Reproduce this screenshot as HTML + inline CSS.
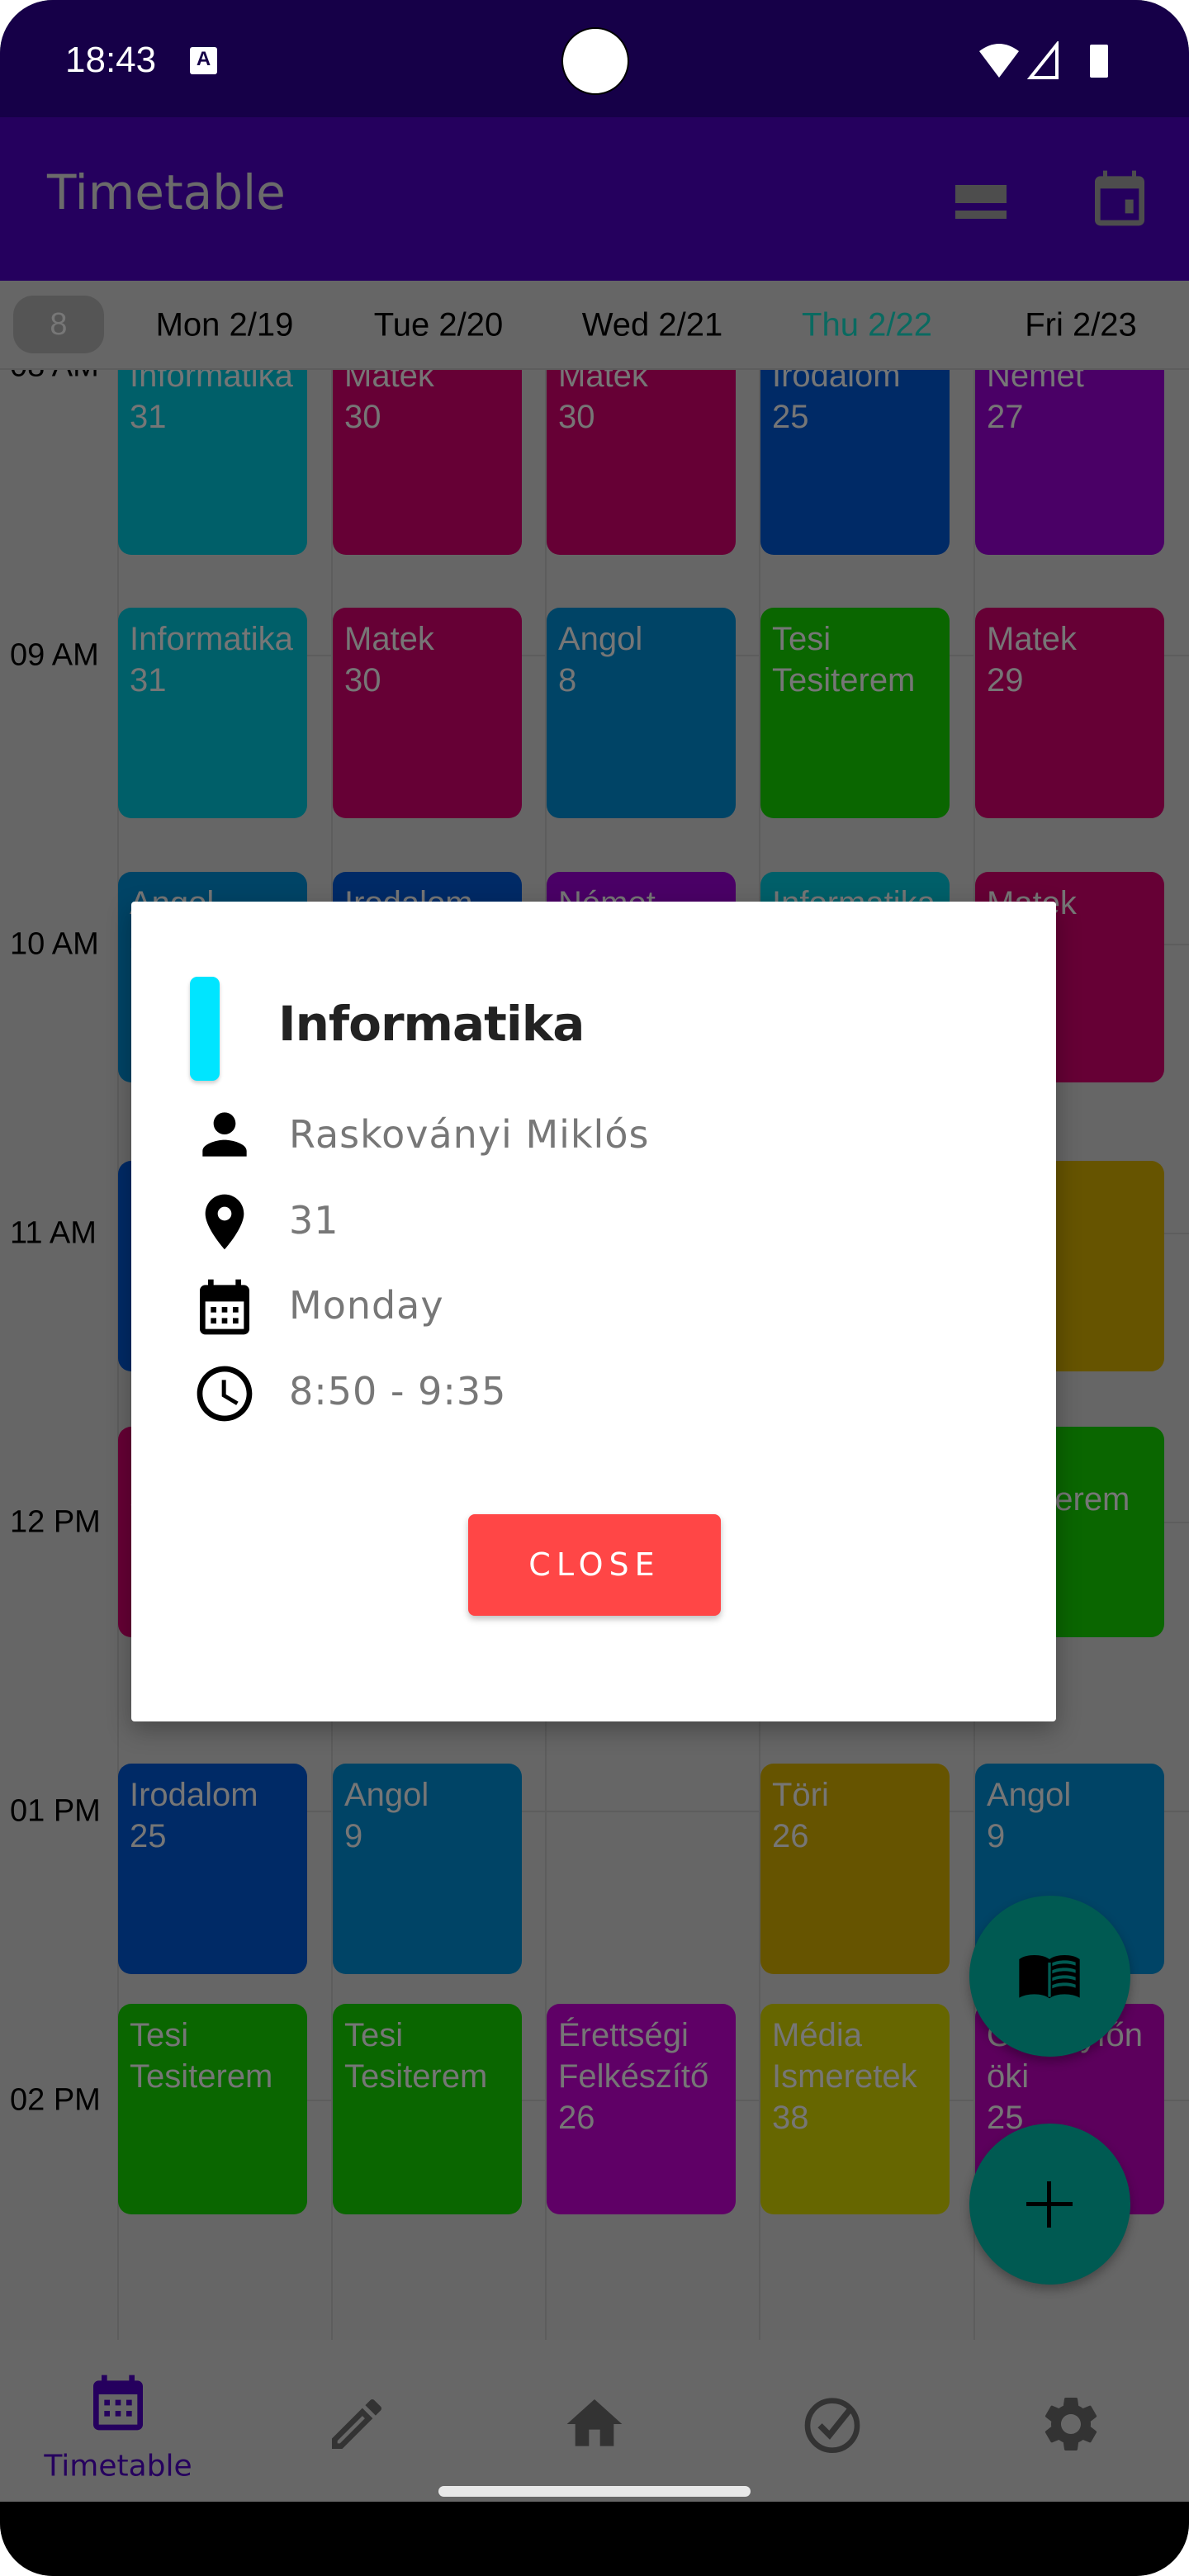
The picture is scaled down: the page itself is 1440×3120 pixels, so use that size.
<!DOCTYPE html>
<html><head><meta charset="utf-8"><style>
*{margin:0;padding:0;box-sizing:border-box}
body{width:1440px;height:3120px;background:#fff;position:relative;overflow:hidden;font-family:"Liberation Sans",sans-serif}
.scr{position:absolute;left:0;top:0;width:1440px;height:3120px;border-radius:64px;overflow:hidden;background:#666}
.abs{position:absolute}
.card{position:absolute;width:229px;height:255px;border-radius:16px;color:#767676;font-size:40px;line-height:50px;padding:13px 0 0 14px;white-space:nowrap;overflow:hidden}
.tl{position:absolute;left:12px;font-size:38px;color:#000;transform:translateY(-50%)}
.hl{position:absolute;left:143px;right:0;height:2px;background:#5d5d5d}
.vl{position:absolute;top:448px;width:2px;height:2386px;background:#5d5d5d}
.day{position:absolute;top:394px;font-size:40px;transform:translate(-50%,-50%);color:#000;white-space:nowrap}
.row{position:absolute;left:350px;font-size:46px;color:#777;transform:translateY(-50%);font-family:"DejaVu Sans","Liberation Sans",sans-serif;letter-spacing:1px}
.ic{position:absolute;left:232px;width:80px;height:80px}
.nav{position:absolute;top:2896px;width:80px;height:80px}
</style></head><body>
<div class="scr">
<!-- grid lines -->
<div class="vl" style="left:142px"></div><div class="vl" style="left:401px"></div><div class="vl" style="left:660px"></div><div class="vl" style="left:919px"></div><div class="vl" style="left:1179px"></div>
<div class="hl" style="top:793px"></div><div class="hl" style="top:1143px"></div><div class="hl" style="top:1493px"></div><div class="hl" style="top:1843px"></div><div class="hl" style="top:2193px"></div><div class="hl" style="top:2543px"></div>
<div class="tl" style="top:444px">08 AM</div>
<div class="tl" style="top:794px">09 AM</div>
<div class="tl" style="top:1144px">10 AM</div>
<div class="tl" style="top:1494px">11 AM</div>
<div class="tl" style="top:1844px">12 PM</div>
<div class="tl" style="top:2194px">01 PM</div>
<div class="tl" style="top:2544px">02 PM</div>
<!-- row 8 -->
<div class="card" style="left:143px;top:417px;background:#005f69">Informatika<br>31</div>
<div class="card" style="left:403px;top:417px;background:#660035">Matek<br>30</div>
<div class="card" style="left:662px;top:417px;background:#660035">Matek<br>30</div>
<div class="card" style="left:921px;top:417px;background:#002a66">Irodalom<br>25</div>
<div class="card" style="left:1181px;top:417px;background:#4a0066">Német<br>27</div>
<!-- row 9 -->
<div class="card" style="left:143px;top:736px;background:#005f69">Informatika<br>31</div>
<div class="card" style="left:403px;top:736px;background:#660035">Matek<br>30</div>
<div class="card" style="left:662px;top:736px;background:#004466">Angol<br>8</div>
<div class="card" style="left:921px;top:736px;background:#0a6600">Tesi<br>Tesiterem</div>
<div class="card" style="left:1181px;top:736px;background:#660035">Matek<br>29</div>
<!-- row 10 -->
<div class="card" style="left:143px;top:1056px;background:#004466">Angol<br>8</div>
<div class="card" style="left:403px;top:1056px;background:#002a66">Irodalom<br>25</div>
<div class="card" style="left:662px;top:1056px;background:#4a0066">Német<br>27</div>
<div class="card" style="left:921px;top:1056px;background:#005f69">Informatika<br>31</div>
<div class="card" style="left:1181px;top:1056px;background:#660035">Matek<br>29</div>
<!-- row 11 -->
<div class="card" style="left:143px;top:1406px;background:#002a66">Irodalom<br>25</div>
<div class="card" style="left:1181px;top:1406px;background:#665400">Töri<br>26</div>
<!-- row 12 -->
<div class="card" style="left:143px;top:1728px;background:#660035">Matek<br>30</div>
<div class="card" style="left:1181px;top:1728px;background:#0a6600">Tesi<br>Tesiterem</div>
<!-- row 1 -->
<div class="card" style="left:143px;top:2136px;background:#002a66">Irodalom<br>25</div>
<div class="card" style="left:403px;top:2136px;background:#004466">Angol<br>9</div>
<div class="card" style="left:921px;top:2136px;background:#665400">Töri<br>26</div>
<div class="card" style="left:1181px;top:2136px;background:#004466">Angol<br>9</div>
<!-- row 2 -->
<div class="card" style="left:143px;top:2427px;background:#0a6600">Tesi<br>Tesiterem</div>
<div class="card" style="left:403px;top:2427px;background:#0a6600">Tesi<br>Tesiterem</div>
<div class="card" style="left:662px;top:2427px;background:#5f0066">Érettségi<br>Felkészítő<br>26</div>
<div class="card" style="left:921px;top:2427px;background:#666600">Média<br>Ismeretek<br>38</div>
<div class="card" style="left:1181px;top:2427px;background:#5c005c">Osztályfőn<br>öki<br>25</div>

<!-- FABs -->
<div class="abs" style="left:1174px;top:2296px;width:195px;height:195px;border-radius:50%;background:#005a52;box-shadow:0 6px 12px rgba(0,0,0,.3)"></div>
<svg class="abs" style="left:1231px;top:2353px" width="80" height="80" viewBox="0 0 24 24"><path fill="#000" d="M1 6c1.5-1.1 3.5-1.5 5.5-1.5S10.5 4.9 12 6c1.5-1.1 3.5-1.5 5.5-1.5S21.5 4.9 23 6v14c-1.5-.9-3.5-1.3-5.5-1.3s-4 .4-5.5 1.5c-1.5-1.1-3.5-1.5-5.5-1.5S2.5 19.1 1 20z"/><path fill="#005a52" d="M13 7.3c1.2-.6 2.9-.9 4.5-.9s3 .3 4 .7v1.2c-1-.4-2.5-.7-4-.7s-3.3.3-4.5.9zm0 2.7c1.2-.6 2.9-.9 4.5-.9s3 .3 4 .7V11c-1-.4-2.5-.7-4-.7s-3.3.3-4.5.9zm0 2.7c1.2-.6 2.9-.9 4.5-.9s3 .3 4 .7v1.2c-1-.4-2.5-.7-4-.7s-3.3.3-4.5.9zm0 2.7c1.2-.6 2.9-.9 4.5-.9s3 .3 4 .7v1.2c-1-.4-2.5-.7-4-.7s-3.3.3-4.5.9zM11.5 7.2v12.5h1V7.2z"/></svg>
<div class="abs" style="left:1174px;top:2572px;width:195px;height:195px;border-radius:50%;background:#005a52;box-shadow:0 6px 12px rgba(0,0,0,.3)"></div>
<div class="abs" style="left:1243px;top:2667px;width:56px;height:5px;background:#000"></div>
<div class="abs" style="left:1268px;top:2642px;width:5px;height:56px;background:#000"></div>

<!-- bottom nav -->
<div class="abs" style="left:0;top:2834px;width:1440px;height:196px;background:#676767"></div>
<svg class="nav" style="left:103px;top:2870px" viewBox="0 0 24 24"><path fill="#25005e" d="M19 4h-1V2h-2v2H8V2H6v2H5c-1.1 0-2 .9-2 2v14c0 1.1.9 2 2 2h14c1.1 0 2-.9 2-2V6c0-1.1-.9-2-2-2zm0 16H5V9h14zM7 11h2v2H7zm4 0h2v2h-2zm4 0h2v2h-2zm-8 4h2v2H7zm4 0h2v2h-2zm4 0h2v2h-2z"/></svg>
<div class="abs" style="left:143px;top:2987px;transform:translate(-50%,-50%);font-size:36px;color:#25005e;font-family:'DejaVu Sans',sans-serif">Timetable</div>
<svg class="nav" style="left:392px" viewBox="0 0 24 24"><path fill="#333" d="M3 17.25V21h3.75L17.81 9.94l-3.75-3.75L3 17.25zM5.92 19H5v-.92l9.06-9.06.92.92L5.92 19zM20.71 5.63l-2.34-2.34a1 1 0 00-1.41 0l-1.83 1.83 3.75 3.75 1.83-1.83a1 1 0 000-1.41z"/></svg>
<svg class="nav" style="left:680px" viewBox="0 0 24 24"><path fill="#333" d="M10 20v-6h4v6h5v-8h3L12 3 2 12h3v8z"/></svg>
<svg class="nav" style="left:968px" viewBox="0 0 24 24"><circle cx="12" cy="12.5" r="9" fill="none" stroke="#333" stroke-width="2"/><path fill="none" stroke="#333" stroke-width="2.2" d="M7.5 12.5l3.5 3.5 8-10"/></svg>
<svg class="nav" style="left:1257px" viewBox="0 0 24 24"><path fill="#333" d="M19.14 12.94c.04-.3.06-.61.06-.94 0-.32-.02-.64-.07-.94l2.03-1.58a.49.49 0 00.12-.61l-1.92-3.32a.488.488 0 00-.59-.22l-2.39.96c-.5-.38-1.03-.7-1.62-.94l-.36-2.54a.484.484 0 00-.48-.41h-3.84c-.24 0-.43.17-.47.41l-.36 2.54c-.59.24-1.13.57-1.62.94l-2.39-.96c-.22-.08-.47 0-.59.22L2.74 8.87c-.12.21-.08.47.12.61l2.03 1.58c-.05.3-.09.63-.09.94s.02.64.07.94l-2.03 1.58a.49.49 0 00-.12.61l1.92 3.32c.12.22.37.29.59.22l2.39-.96c.5.38 1.03.7 1.62.94l.36 2.54c.05.24.24.41.48.41h3.84c.24 0 .44-.17.47-.41l.36-2.54c.59-.24 1.13-.56 1.62-.94l2.39.96c.22.08.47 0 .59-.22l1.92-3.32c.12-.22.07-.47-.12-.61l-2.01-1.58zM12 15.6c-1.98 0-3.6-1.62-3.6-3.6s1.62-3.6 3.6-3.6 3.6 1.62 3.6 3.6-1.62 3.6-3.6 3.6z"/></svg>
<div class="abs" style="left:0;top:3030px;width:1440px;height:90px;background:#000"></div>
<div class="abs" style="left:531px;top:3011px;width:378px;height:13px;border-radius:7px;background:#e8e8e8"></div>

<!-- day header -->
<div class="abs" style="left:0;top:340px;width:1440px;height:108px;background:#666;border-bottom:2px solid #5d5d5d"></div>
<div class="abs" style="left:16px;top:358px;width:110px;height:70px;border-radius:24px;background:#555;color:#777;font-size:38px;text-align:center;line-height:70px">8</div>
<div class="day" style="left:272px">Mon 2/19</div>
<div class="day" style="left:531px">Tue 2/20</div>
<div class="day" style="left:790px">Wed 2/21</div>
<div class="day" style="left:1050px;color:#0a6a60">Thu 2/22</div>
<div class="day" style="left:1309px">Fri 2/23</div>

<!-- app bar -->
<div class="abs" style="left:0;top:142px;width:1440px;height:198px;background:#25005e"></div>
<div class="abs" style="left:57px;top:233px;transform:translateY(-50%);font-size:58px;color:#6b6b6b;font-family:'DejaVu Sans',sans-serif">Timetable</div>
<div class="abs" style="left:1157px;top:224px;width:62px;height:22px;background:#4d4d4d"></div>
<div class="abs" style="left:1157px;top:255px;width:62px;height:10px;background:#4d4d4d"></div>
<svg class="abs" style="left:1316px;top:200px" width="80" height="80" viewBox="0 0 24 24"><path fill="#4d4d4d" d="M19 4h-1V2h-1.5v2h-9V2H6v2H5c-1.1 0-2 .9-2 2v14c0 1.1.9 2 2 2h14c1.1 0 2-.9 2-2V6c0-1.1-.9-2-2-2zm0 16H5V8.5h14zm-5-7.5h3v5h-3z"/></svg>

<!-- status bar -->
<div class="abs" style="left:0;top:0;width:1440px;height:142px;background:#160048"></div>
<div class="abs" style="left:79px;top:73px;transform:translateY(-50%);font-size:44px;color:#fff">18:43</div>
<div class="abs" style="left:230px;top:57px;width:33px;height:33px;background:#fff;border-radius:3px;color:#160048;font-size:24px;font-weight:bold;text-align:center;line-height:30px">A</div>
<div class="abs" style="left:680px;top:33px;width:82px;height:82px;border-radius:50%;background:#fff;border:2px solid #000"></div>
<svg class="abs" style="left:1184px;top:50px" width="160" height="46" viewBox="0 0 160 46"><path fill="#fff" d="M2 12Q26 -6 50 12L26 44z"/><path fill="none" stroke="#fff" stroke-width="4" d="M64 44L96 4V44z"/><rect x="136" y="4" width="22" height="40" rx="2" fill="#fff"/></svg>

<!-- dialog -->
<div class="abs" style="left:159px;top:1092px;width:1120px;height:993px;background:#fff;border-radius:4px;box-shadow:0 10px 30px rgba(0,0,0,.3)"></div>
<div class="abs" style="left:230px;top:1183px;width:36px;height:126px;border-radius:9px;background:#00e5ff;box-shadow:0 3px 5px rgba(0,0,0,.2)"></div>
<div class="abs" style="left:337px;top:1240px;transform:translateY(-50%);font-size:58px;color:#222;font-weight:bold;font-family:'DejaVu Sans',sans-serif;letter-spacing:-1px">Informatika</div>
<svg class="ic" style="top:1334px" viewBox="0 0 24 24"><path d="M12 12c2.21 0 4-1.79 4-4s-1.79-4-4-4-4 1.79-4 4 1.79 4 4 4zm0 2c-2.67 0-8 1.34-8 4v2h16v-2c0-2.66-5.33-4-8-4z"/></svg>
<div class="row" style="top:1374px">Raskoványi Miklós</div>
<svg class="ic" style="top:1440px" viewBox="0 0 24 24"><path d="M12 2C8.13 2 5 5.13 5 9c0 5.25 7 13 7 13s7-7.75 7-13c0-3.87-3.13-7-7-7zm0 9.5c-1.38 0-2.5-1.12-2.5-2.5s1.12-2.5 2.5-2.5 2.5 1.12 2.5 2.5-1.12 2.5-2.5 2.5z"/></svg>
<div class="row" style="top:1478px">31</div>
<svg class="ic" style="top:1543px" viewBox="0 0 24 24"><path d="M19 4h-1V2h-2v2H8V2H6v2H5c-1.11 0-2 .9-2 2v14a2 2 0 002 2h14c1.1 0 2-.9 2-2V6c0-1.1-.9-2-2-2zm0 16H5V10h14v10zM9 14H7v-2h2v2zm4 0h-2v-2h2v2zm4 0h-2v-2h2v2zm-8 4H7v-2h2v2zm4 0h-2v-2h2v2zm4 0h-2v-2h2v2z"/></svg>
<div class="row" style="top:1581px">Monday</div>
<svg class="ic" style="top:1648px" viewBox="0 0 24 24"><path d="M11.99 2C6.47 2 2 6.48 2 12s4.47 10 9.99 10C17.52 22 22 17.52 22 12S17.52 2 11.99 2zM12 20c-4.42 0-8-3.58-8-8s3.58-8 8-8 8 3.58 8 8-3.58 8-8 8zm.5-13H11v6l5.25 3.15.75-1.23-4.5-2.67z"/></svg>
<div class="row" style="top:1685px">8:50 - 9:35</div>
<div class="abs" style="left:567px;top:1834px;width:306px;height:123px;border-radius:8px;background:#ff4646;box-shadow:0 4px 8px rgba(0,0,0,.25);color:#fff;font-size:38px;text-align:center;line-height:123px;letter-spacing:7px;font-family:'DejaVu Sans',sans-serif">CLOSE</div>
</div>
</body></html>
